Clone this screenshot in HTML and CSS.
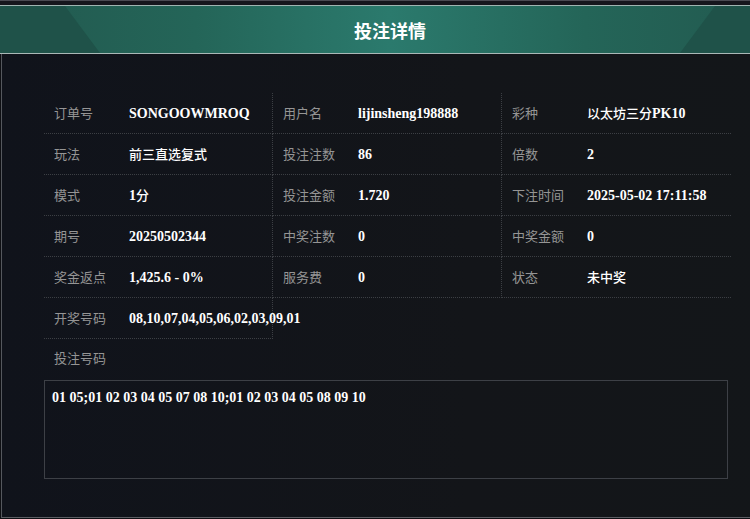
FILE: index.html
```html
<!DOCTYPE html>
<html lang="zh-CN">

<head>
    <meta charset="UTF-8">
    <meta name="viewport" content="width=device-width, initial-scale=1.0">
    <title>投注详情</title>
    <link rel="stylesheet" href="styles.css">
</head>

<body>
    <div class="modal">
        <div class="topbar"></div>
        <div class="header">
            <h2 class="title">投注详情</h2>
        </div>
        <div class="content">
            <div class="grid">
                <div class="cell"><span class="label">订单号</span><span class="value">SONGOOWMROQ</span></div>
                <div class="cell"><span class="label">用户名</span><span class="value">lijinsheng198888</span></div>
                <div class="cell"><span class="label">彩种</span><span class="value"><span class="cjk">以太坊三分</span>PK10</span></div>

                <div class="cell"><span class="label">玩法</span><span class="value"><span class="cjk">前三直选复式</span></span></div>
                <div class="cell"><span class="label">投注注数</span><span class="value">86</span></div>
                <div class="cell"><span class="label">倍数</span><span class="value">2</span></div>

                <div class="cell"><span class="label">模式</span><span class="value">1<span class="cjk">分</span></span></div>
                <div class="cell"><span class="label">投注金额</span><span class="value">1.720</span></div>
                <div class="cell"><span class="label">下注时间</span><span class="value">2025-05-02 17:11:58</span></div>

                <div class="cell"><span class="label">期号</span><span class="value">20250502344</span></div>
                <div class="cell"><span class="label">中奖注数</span><span class="value">0</span></div>
                <div class="cell"><span class="label">中奖金额</span><span class="value">0</span></div>

                <div class="cell"><span class="label">奖金返点</span><span class="value">1,425.6 - 0%</span></div>
                <div class="cell"><span class="label">服务费</span><span class="value">0</span></div>
                <div class="cell"><span class="label">状态</span><span class="value"><span class="cjk">未中奖</span></span></div>

                <div class="cell"><span class="label">开奖号码</span><span class="value">08,10,07,04,05,06,02,03,09,01</span></div>
            </div>
            <div class="bet-label">投注号码</div>
            <div class="bet-box">01 05;01 02 03 04 05 07 08 10;01 02 03 04 05 08 09 10</div>
        </div>
    </div>
</body>

</html>
```

FILE: styles.css
```css
body {
    margin: 0;
    padding: 0;
    width: 750px;
    height: 519px;
    overflow: hidden;
    background: #0e0f13;
    font-family: "Noto Sans CJK SC", sans-serif;
}

.modal {
    width: 780px;
}

.topbar {
    height: 4px;
    background: #16161d;
    border-top: 1px solid #4a4a52;
}

.header {
    position: relative;
    height: 47px;
    border-top: 1px solid #9fb4b1;
    border-bottom: 1px solid #aab8b7;
    background: linear-gradient(90deg, #22594f 0%, #246558 25%, #2b7a6d 50%, #246558 75%, #22594f 100%);
    display: flex;
    justify-content: center;
    align-items: center;
    overflow: hidden;
}

.header::before,
.header::after {
    content: "";
    position: absolute;
    top: 0;
    bottom: 0;
    width: 100px;
    background: #1f5249;
}

.header::before {
    left: 0;
    clip-path: polygon(0 0, 65% 0, 100% 100%, 0 100%);
}

.header::after {
    right: 0;
    clip-path: polygon(35% 0, 100% 0, 100% 100%, 0 100%);
}

.title {
    position: relative;
    z-index: 1;
    margin: 0;
    color: #ffffff;
    font-size: 18px;
    font-weight: bold;
}

.content {
    margin-left: 1px;
    height: 424px;
    padding: 39px 0 0 42px;
    border-left: 1px solid #55585e;
    border-bottom: 1px solid #5c5f64;
    background: linear-gradient(90deg, #10131b, #131519 60%, #131619);
}

.grid {
    display: grid;
    grid-template-columns: 229px 229px 229px;
}

.cell {
    box-sizing: border-box;
    height: 41px;
    line-height: 37px;
    padding-left: 10px;
    white-space: nowrap;
    border-bottom: 1px dotted #3c3f44;
}

.cell:not(:nth-child(3n)) {
    border-right: 1px dotted #3c3f44;
}

.label {
    display: inline-block;
    width: 75px;
    color: #959595;
    font-size: 13px;
}

.value {
    color: #ffffff;
    font-family: "Liberation Serif", "Noto Sans CJK SC", serif;
    font-weight: bold;
    font-size: 14px;
}

.cjk {
    font-family: "Noto Sans CJK SC", sans-serif;
    font-weight: 500;
    font-size: 13px;
}

.bet-label {
    height: 41px;
    line-height: 38px;
    padding-left: 10px;
    color: #959595;
    font-size: 13px;
}

.bet-box {
    box-sizing: border-box;
    width: 684px;
    height: 99px;
    padding: 9px 7px;
    border: 1px solid #3d4046;
    color: #ffffff;
    font-family: "Liberation Serif", serif;
    font-weight: bold;
    font-size: 14px;
}
```
